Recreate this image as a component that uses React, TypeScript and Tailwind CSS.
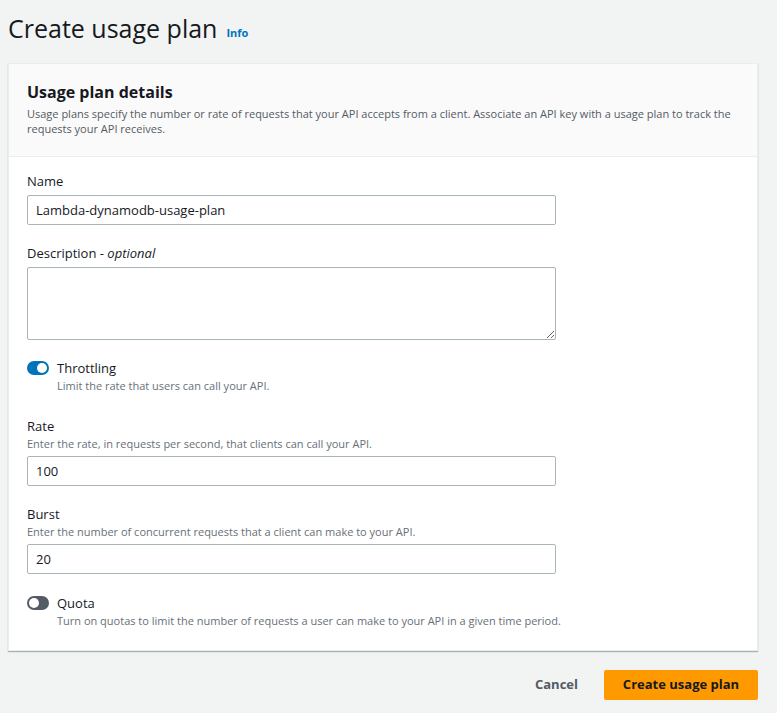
import React, { useState } from 'react';

// --- form field wrapper ---
function Field({ label, hint, children }: { label: React.ReactNode; hint?: string; children: React.ReactNode }) {
  return (
    <div className="flex flex-col">
      <label className="text-[13px] leading-[20px] text-[#16191f]">{label}</label>
      {hint && <p className="text-[11px] leading-[16px] text-[#687078]">{hint}</p>}
      <div className="mt-[4px]">{children}</div>
    </div>
  );
}

function Toggle({ on, onClick }: { on: boolean; onClick: () => void }) {
  return (
    <button
      onClick={onClick}
      className={`relative w-[22px] h-[14px] rounded-full shrink-0 mt-[3px] ${on ? 'bg-[#0073bb]' : 'bg-[#545b64]'}`}
    >
      <span
        className={`absolute top-[2px] w-[10px] h-[10px] rounded-full bg-white ${on ? 'left-[10px]' : 'left-[2px]'}`}
      />
    </button>
  );
}

export default function App() {
  const [throttling, setThrottling] = useState(true);
  const [quota, setQuota] = useState(false);

  return (
    <div className="min-h-[713px] bg-[#f2f3f3] text-[#16191f]" style={{ fontFamily: '"Open Sans", "Noto Sans", Arial, sans-serif' }}>
      <div className="px-[8px] pr-[19px]">
        {/* タイトル */}
        <div className="flex items-end gap-[9px] pt-[10px] h-[63px]">
          <h1 className="text-[25px] leading-[34px] font-normal pb-[18px]">Create usage plan</h1>
          <a className="text-[11px] font-bold text-[#0073bb] pb-[22px]">Info</a>
        </div>

        {/* パネル */}
        <div className="bg-white border border-[#eaeded] shadow-[0_1px_1px_0_rgba(0,28,36,0.3)]">
          <div className="bg-[#fafafa] border-b border-[#eaeded] px-[18px] pt-[17px] pb-[20px]">
            <h2 className="text-[16px] leading-[22px] font-bold">Usage plan details</h2>
            <p className="text-[11px] leading-[15px] text-[#545b64] mt-[3px]">
              Usage plans specify the number or rate of requests that your API accepts from a client. Associate an API key with a usage plan to track the requests your API receives.
            </p>
          </div>

          <div className="px-[18px] pt-[14px] pb-[21px] flex flex-col">
            <div className="w-[529px] flex flex-col gap-[18px]">
              <Field label="Name">
                <input
                  defaultValue="Lambda-dynamodb-usage-plan"
                  className="w-full h-[30px] border border-[#aab7b8] rounded-[2px] px-[8px] text-[13px] outline-none"
                />
              </Field>
              <Field label={<>Description - <i>optional</i></>}>
                <textarea className="block w-full h-[73px] border border-[#aab7b8] rounded-[2px] px-[8px] py-[4px] text-[13px] outline-none" />
              </Field>
            </div>

            <div className="flex gap-[8px] mt-[18px]">
              <Toggle on={throttling} onClick={() => setThrottling(!throttling)} />
              <div>
                <div className="text-[13px] leading-[20px]">Throttling</div>
                <div className="text-[11px] leading-[16px] text-[#687078]">Limit the rate that users can call your API.</div>
              </div>
            </div>

            <div className="w-[529px] flex flex-col gap-[18px] mt-[22px]">
              <Field label="Rate" hint="Enter the rate, in requests per second, that clients can call your API.">
                <input defaultValue="100" className="w-full h-[30px] border border-[#aab7b8] rounded-[2px] px-[8px] text-[13px] outline-none" />
              </Field>
              <Field label="Burst" hint="Enter the number of concurrent requests that a client can make to your API.">
                <input defaultValue="20" className="w-full h-[30px] border border-[#aab7b8] rounded-[2px] px-[8px] text-[13px] outline-none" />
              </Field>
            </div>

            <div className="flex gap-[8px] mt-[19px]">
              <Toggle on={quota} onClick={() => setQuota(!quota)} />
              <div>
                <div className="text-[13px] leading-[20px]">Quota</div>
                <div className="text-[11px] leading-[16px] text-[#687078]">Turn on quotas to limit the number of requests a user can make to your API in a given time period.</div>
              </div>
            </div>
          </div>
        </div>

        {/* ボタン */}
        <div className="flex justify-end items-center gap-[6px] mt-[19px]">
          <button className="text-[13px] font-bold text-[#545b64] px-[20px] h-[30px]">Cancel</button>
          <button className="text-[13px] font-bold text-[#16191f] bg-[#ff9900] rounded-[2px] w-[154px] h-[30px]">Create usage plan</button>
        </div>
      </div>
    </div>
  );
}
